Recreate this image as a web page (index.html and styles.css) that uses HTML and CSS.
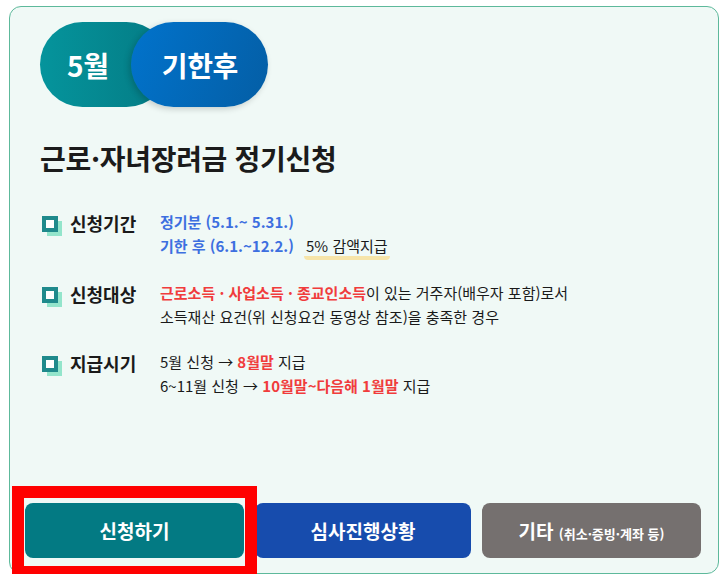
FILE: index.html
```html
<!DOCTYPE html>
<html lang="ko">
<head>
  <meta charset="UTF-8">
  <meta name="viewport" content="width=device-width, initial-scale=1.0">
  <title>근로·자녀장려금 정기신청</title>
  <link rel="stylesheet" href="styles.css">
</head>
<body>
  <div class="card">
    <div class="badge">
      <span class="badge-month">5월</span>
      <span class="badge-after">기한후</span>
    </div>

    <h2 class="title">근로·자녀장려금 정기신청</h2>

    <ul class="info">
      <li class="info-row">
        <div class="info-label">
          <svg class="check" width="20" height="20" viewBox="0 0 20 20">
            <rect x="5" y="5" width="15" height="15" fill="#93e5cb"/>
            <rect x="2" y="2" width="12" height="12" fill="#fff" stroke="#1f8a8c" stroke-width="4"/>
          </svg>
          <span>신청기간</span>
        </div>
        <div class="info-value">
          <p><b class="blue">정기분 (5.1.~ 5.31.)</b></p>
          <p><b class="blue">기한 후 (6.1.~12.2.)</b> <span class="mark">5% 감액지급</span></p>
        </div>
      </li>
      <li class="info-row">
        <div class="info-label">
          <svg class="check" width="20" height="20" viewBox="0 0 20 20">
            <rect x="5" y="5" width="15" height="15" fill="#93e5cb"/>
            <rect x="2" y="2" width="12" height="12" fill="#fff" stroke="#1f8a8c" stroke-width="4"/>
          </svg>
          <span>신청대상</span>
        </div>
        <div class="info-value">
          <p><b class="red">근로소득 · 사업소득 · 종교인소득</b>이 있는 거주자(배우자 포함)로서</p>
          <p>소득재산 요건(위 신청요건 동영상 참조)을 충족한 경우</p>
        </div>
      </li>
      <li class="info-row">
        <div class="info-label">
          <svg class="check" width="20" height="20" viewBox="0 0 20 20">
            <rect x="5" y="5" width="15" height="15" fill="#93e5cb"/>
            <rect x="2" y="2" width="12" height="12" fill="#fff" stroke="#1f8a8c" stroke-width="4"/>
          </svg>
          <span>지급시기</span>
        </div>
        <div class="info-value">
          <p>5월 신청 → <b class="red">8월말</b> 지급</p>
          <p>6~11월 신청 → <b class="red">10월말~다음해 1월말</b> 지급</p>
        </div>
      </li>
    </ul>

    <div class="actions">
      <div class="action-wrap">
        <button class="btn btn-apply">신청하기</button>
        <span class="focus-box"></span>
      </div>
      <button class="btn btn-status">심사진행상황</button>
      <button class="btn btn-etc">기타 <small>(취소·증빙·계좌 등)</small></button>
    </div>
  </div>
</body>
</html>
```

FILE: styles.css
```css
* {
  margin: 0;
  padding: 0;
  box-sizing: border-box;
}
body {
  font-family: "Noto Sans CJK KR", "Noto Sans", sans-serif;
  background-color: #fff;
  color: #1a1a1a;
  padding: 6px 6px 0 9px;
}
.card {
  width: 710px;
  height: 568px;
  background-color: #f0f9f6;
  border: 1.5px solid #5db99b;
  border-radius: 12px;
  padding: 15px 15px 15px 30px;
  display: flex;
  flex-direction: column;
}

/* badge */
.badge {
  display: flex;
  height: 85px;
  font-size: 28px;
  font-weight: 700;
  color: #fff;
}
.badge span {
  display: flex;
  align-items: center;
  border-radius: 43px;
  letter-spacing: -0.3px;
}
.badge-month {
  background: linear-gradient(90deg, #05949c, #047b84);
  padding: 0 60px 0 27px;
}
.badge-after {
  background: linear-gradient(110deg, #0173cc, #045ea5);
  padding: 0 30px 0 31px;
  margin-left: -38px;
  box-shadow: -2px 2px 6px rgba(0, 0, 0, 0.18);
}

.title {
  font-size: 28px;
  font-weight: 700;
  line-height: 36px;
  color: #1b1b1b;
  margin-top: 33px;
  letter-spacing: -0.3px;
}

/* info rows */
.info {
  list-style: none;
  margin-top: 34px;
  display: flex;
  flex-direction: column;
  gap: 21px;
}
.info-row {
  display: flex;
}
.info-label {
  width: 120px;
  display: flex;
  align-items: flex-start;
  gap: 8px;
  padding-left: 2px;
  font-size: 18px;
  font-weight: 700;
  line-height: 28px;
  margin-top: -1px;
}
.check {
  margin-top: 7px;
  flex: none;
}
.info-value {
  font-size: 15px;
  line-height: 24px;
  color: #1a1a1a;
}
.blue {
  color: #3d6fe0;
}
.red {
  color: #f03c3c;
}
.mark {
  display: inline-block;
  margin-left: 6px;
  padding: 0 2px;
  line-height: 20px;
  border-bottom: 4px solid #f6e4a9;
  border-radius: 4px;
}

/* buttons */
.actions {
  margin-top: auto;
  margin-left: -15px;
  display: flex;
  gap: 11px;
}
.action-wrap {
  position: relative;
  display: flex;
}
.btn {
  width: 219px;
  height: 55px;
  border: none;
  border-radius: 8px;
  color: #fff;
  font-family: inherit;
  font-size: 19px;
  font-weight: 700;
  cursor: pointer;
}
.btn small {
  font-size: 13px;
}
.btn-apply {
  background-color: #037a83;
}
.btn-status {
  width: 216px;
  background-color: #174cad;
}
.btn-etc {
  background-color: #75706f;
}
.focus-box {
  position: absolute;
  left: -13px;
  top: -17px;
  right: -13px;
  bottom: -20px;
  border: 12px solid #ff0000;
  pointer-events: none;
}
```
